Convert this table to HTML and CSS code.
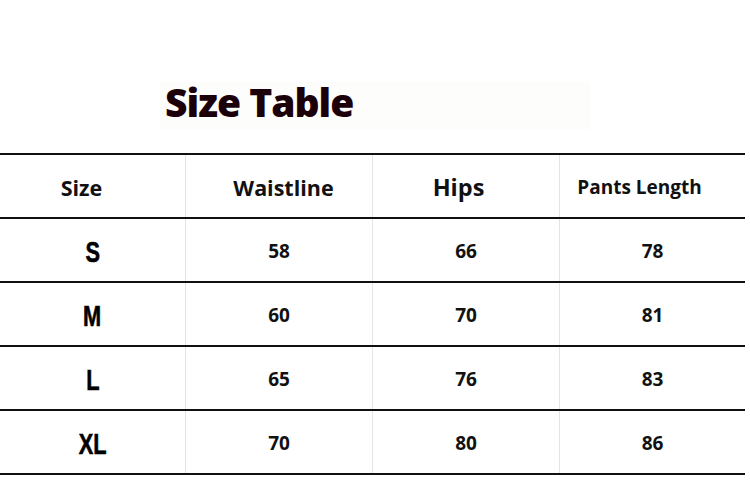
FILE: index.html
```html
<!DOCTYPE html>
<html>
<head>
<meta charset="utf-8">
<link rel="stylesheet" href="styles.css">
</head>
<body>
<div class="page">
  <div class="title-bar"><h1 class="title">Size Table</h1></div>
  <div class="table">
    <div class="row head">
      <div class="cell h-size">Size</div>
      <div class="cell h-waist">Waistline</div>
      <div class="cell h-hips">Hips</div>
      <div class="cell h-len">Pants Length</div>
    </div>
    <div class="row">
      <div class="cell size"><span class="narrow">S</span></div>
      <div class="cell num">58</div>
      <div class="cell num">66</div>
      <div class="cell num">78</div>
    </div>
    <div class="row">
      <div class="cell size"><span class="narrow">M</span></div>
      <div class="cell num">60</div>
      <div class="cell num">70</div>
      <div class="cell num">81</div>
    </div>
    <div class="row">
      <div class="cell size"><span class="narrow">L</span></div>
      <div class="cell num">65</div>
      <div class="cell num">76</div>
      <div class="cell num">83</div>
    </div>
    <div class="row">
      <div class="cell size"><span class="narrow">XL</span></div>
      <div class="cell num">70</div>
      <div class="cell num">80</div>
      <div class="cell num">86</div>
    </div>
  </div>
</div>
</body>
</html>
```

FILE: styles.css
```css
html, body {
  margin: 0;
  padding: 0;
  background: #ffffff;
}
.page {
  width: 750px;
  height: 497px;
  display: flex;
  flex-direction: column;
  font-family: "Open Sans", "Noto Sans", sans-serif;
  color: #111;
}
.title-bar {
  margin-top: 82px;
  margin-left: 160px;
  width: 430px;
  height: 48px;
  background: #fdfdfc;
}
.title {
  margin: 0;
  padding-left: 5px;
  font-size: 39px;
  line-height: 39px;
  font-weight: 800;
  letter-spacing: -1px;
  color: #1c0009;
}
.table {
  margin-top: 23px;
  width: 745px;
  border-top: 2px solid #111;
}
.row {
  display: grid;
  grid-template-columns: 185px 187px 187px 186px;
  height: 62px;
  border-bottom: 2px solid #111;
}
.cell {
  display: flex;
  align-items: center;
  justify-content: center;
  font-weight: 700;
}
.cell + .cell {
  border-left: 1px solid #e4e4e4;
}
.head .cell {
  padding-top: 2px;
}
.h-size {
  font-size: 21.5px;
  padding-right: 22px;
}
.h-waist {
  font-size: 21.5px;
  padding-left: 9px;
}
.h-hips {
  font-size: 23.5px;
  padding-right: 15px;
}
.h-len {
  font-size: 19px;
  padding-right: 26px;
  font-weight: 700;
}
.size {
  font-family: "Liberation Sans", Arial, sans-serif;
  font-size: 29px;
  font-weight: 700;
  color: #000;
  padding-top: 5px;
}
.narrow {
  display: inline-block;
  transform: scaleX(0.75);
  -webkit-text-stroke: 0.6px #000;
}
.num {
  font-size: 19px;
  color: #111;
  padding-top: 2px;
}
```
